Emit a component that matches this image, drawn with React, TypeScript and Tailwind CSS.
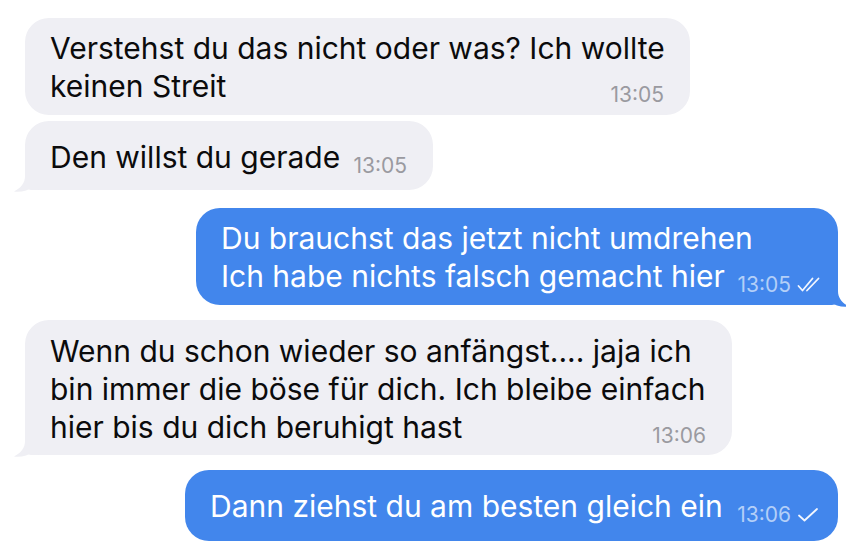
import React from 'react'

type Msg = {
  out: boolean
  lines: string[]
  time: string
  width: string
  pad: string
  tail?: boolean
  ticks?: 1 | 2
}

const messages: Msg[] = [
  {
    out: false,
    lines: ['Verstehst du das nicht oder was? Ich wollte', 'keinen Streit'],
    time: '13:05',
    width: 'w-[665px]',
    pad: 'pt-[11px] pb-[10px]',
  },
  {
    out: false,
    lines: ['Den willst du gerade'],
    time: '13:05',
    width: 'w-[408px]',
    pad: 'pt-[17px] pb-[14px]',
    tail: true,
  },
  {
    out: true,
    lines: ['Du brauchst das jetzt nicht umdrehen', 'Ich habe nichts falsch gemacht hier'],
    time: '13:05',
    width: 'w-[642px]',
    pad: 'pt-[11px] pb-[10px]',
    tail: true,
    ticks: 2,
  },
  {
    out: false,
    lines: [
      'Wenn du schon wieder so anfängst.... jaja ich',
      'bin immer die böse für dich. Ich bleibe einfach',
      'hier bis du dich beruhigt hast',
    ],
    time: '13:06',
    width: 'w-[707px]',
    pad: 'pt-[12px] pb-[9px]',
    tail: true,
  },
  {
    out: true,
    lines: ['Dann ziehst du am besten gleich ein'],
    time: '13:06',
    width: 'w-[653px]',
    pad: 'pt-[17px] pb-[16px]',
    ticks: 1,
  },
]

function Tail({ out }: { out: boolean }) {
  // kleiner Haken unten an der Blase
  return (
    <svg
      width="40"
      height="26"
      viewBox="0 0 40 26"
      className={
        out
          ? 'absolute right-[-11px] bottom-[-2px] -scale-x-100'
          : 'absolute left-[-11px] bottom-[-2px]'
      }
    >
      <path
        d="M11 0 L11 10 C11 17 7 22 0 25.5 C7 26.5 14 24.5 19 21 C23 23 27 24 32 24 L40 24 L40 0 Z"
        fill={out ? '#4286ec' : '#efeff4'}
      />
    </svg>
  )
}

function Ticks({ n }: { n: 1 | 2 }) {
  return (
    <svg width="24" height="16" viewBox="0 0 24 16" className="ml-[6px]" fill="none">
      {n === 2 ? (
        <>
          <path d="M1.5 9 L5.5 13.5 L15.5 1.5" stroke="#f2f6fe" strokeWidth="1.8" strokeLinecap="round" strokeLinejoin="round" />
          <path d="M10 13.5 L21.5 1.5" stroke="#f2f6fe" strokeWidth="1.8" strokeLinecap="round" />
        </>
      ) : (
        <path d="M2 8.5 L7.5 13.5 L20 2" stroke="#f2f6fe" strokeWidth="1.8" strokeLinecap="round" strokeLinejoin="round" />
      )}
    </svg>
  )
}

function Bubble({ m }: { m: Msg }) {
  const last = m.lines.length - 1
  return (
    <div
      className={`relative ${m.width} ${m.pad} pl-[25px] ${
        m.out
          ? 'bg-[#4286ec] text-white pr-[17px] rounded-[24px]'
          : 'bg-[#efeff4] text-[#0b0b0c] pr-[26px] rounded-[24px]'
      } ${m.tail ? (m.out ? 'rounded-br-[6px]' : 'rounded-bl-[6px]') : ''}`}
    >
      {m.tail && <Tail out={m.out} />}
      {m.lines.map((line, i) =>
        i < last ? (
          <div key={i} className="relative whitespace-nowrap">{line}</div>
        ) : (
          <div key={i} className="relative flex items-baseline justify-between whitespace-nowrap">
            <span>{line}</span>
            <span
              className={`relative top-[5px] flex items-center text-[21px] leading-none ${
                m.out ? 'text-[#b3cff8]' : 'text-[#9a9aa0]'
              }`}
            >
              {m.time}
              {m.ticks && <Ticks n={m.ticks} />}
            </span>
          </div>
        )
      )}
    </div>
  )
}

export default function App() {
  return (
    <div
      className="w-[846px] h-[543px] overflow-hidden bg-white flex flex-col pt-[18px] text-[30px] leading-[38px]"
      style={{ fontFamily: 'Inter, "Noto Sans", sans-serif' }}
    >
      <div className="ml-[25px]"><Bubble m={messages[0]} /></div>
      <div className="ml-[25px] mt-[6px]"><Bubble m={messages[1]} /></div>
      <div className="self-end mr-[8px] mt-[18px]"><Bubble m={messages[2]} /></div>
      <div className="ml-[25px] mt-[15px]"><Bubble m={messages[3]} /></div>
      <div className="self-end mr-[8px] mt-[15px]"><Bubble m={messages[4]} /></div>
    </div>
  )
}
